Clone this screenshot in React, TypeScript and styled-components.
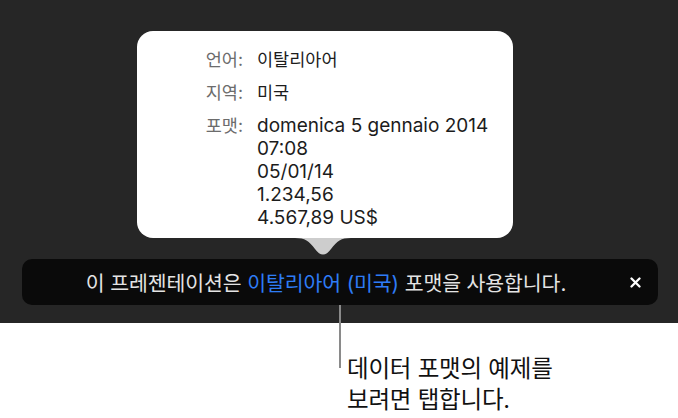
import React from "react";
import styled, { createGlobalStyle } from "styled-components";

const Global = createGlobalStyle`
  html, body { margin: 0; padding: 0; background: #ffffff; }
  body { font-family: "Inter", "Noto Sans CJK KR", sans-serif; }
`;

const Page = styled.div`
  position: relative;
  width: 678px;
  height: 418px;
  overflow: hidden;
  background: #ffffff;
`;

const Stage = styled.div`
  height: 323px;
  background: #262626;
  display: flex;
  flex-direction: column;
  padding-top: 31px;
  box-sizing: border-box;
`;

const Popover = styled.div`
  position: relative;
  margin-left: 137px;
  width: 376px;
  height: 207px;
  box-sizing: border-box;
  background: #ffffff;
  border-radius: 16px;
  padding: 17px 0 0 59px;
  display: grid;
  grid-template-columns: 47px auto;
  column-gap: 14px;
  row-gap: 10px;
  align-content: start;
`;

const Label = styled.div`
  text-align: right;
  color: #6c6c6c;
  font-size: 17.5px;
  line-height: 23px;
  white-space: nowrap;
`;

const Value = styled.div<{ $ko?: boolean }>`
  color: #1c1c1c;
  font-size: ${(p) => (p.$ko ? "17.5px" : "19px")};
  line-height: 23px;
  white-space: nowrap;
`;

const Line = styled.div`
  display: block;
`;

const Arrow = styled.svg`
  position: absolute;
  left: 158px;
  bottom: -20px;
`;

const Banner = styled.div`
  margin: 21px 20px 0 22px;
  height: 46px;
  background: #0a0a0a;
  border-radius: 10px;
  display: flex;
  align-items: center;
  position: relative;
`;

const BannerText = styled.div`
  flex: 1;
  text-align: center;
  color: #e4e4e4;
  font-size: 20.5px;
  padding-left: 18px;
  letter-spacing: -0.1px;
`;

const Blue = styled.span`
  color: #2e7cf6;
`;

const Close = styled.div`
  width: 46px;
  display: flex;
  justify-content: center;
  align-items: center;
`;

const Callout = styled.div`
  padding: 30px 0 0 347px;
  color: #111111;
  font-size: 23.5px;
  line-height: 31px;
  letter-spacing: -0.2px;
`;

const Leader = styled.div`
  position: absolute;
  left: 339px;
  top: 305px;
  width: 2px;
  height: 63px;
  background: #8a8a8a;
`;

export default function App() {
  return (
    <Page>
      <Global />
      <Stage>
        <Popover>
          <Label>언어:</Label>
          <Value $ko>이탈리아어</Value>
          <Label>지역:</Label>
          <Value $ko>미국</Value>
          <Label>포맷:</Label>
          <Value>
            <Line>domenica 5 gennaio 2014</Line>
            <Line>07:08</Line>
            <Line>05/01/14</Line>
            <Line>1.234,56</Line>
            <Line>4.567,89 US$</Line>
          </Value>
          <Arrow width="56" height="20" viewBox="0 0 56 20">
            <path d="M0 0 C10 0 14 3 20 11 Q28 22 36 11 C42 3 46 0 56 0 Z" fill="#cdcdcd" />
          </Arrow>
        </Popover>
        <Banner>
          <BannerText>
            이 프레젠테이션은 <Blue>이탈리아어 (미국)</Blue> 포맷을 사용합니다.
          </BannerText>
          <Close>
            <svg width="11" height="11" viewBox="0 0 11 11">
              <path d="M1.5 1.5 L9.5 9.5 M9.5 1.5 L1.5 9.5" stroke="#ffffff" strokeWidth="2.3" strokeLinecap="round" />
            </svg>
          </Close>
        </Banner>
      </Stage>
      <Leader />
      <Callout>
        <div>데이터 포맷의 예제를</div>
        <div>보려면 탭합니다.</div>
      </Callout>
    </Page>
  );
}
